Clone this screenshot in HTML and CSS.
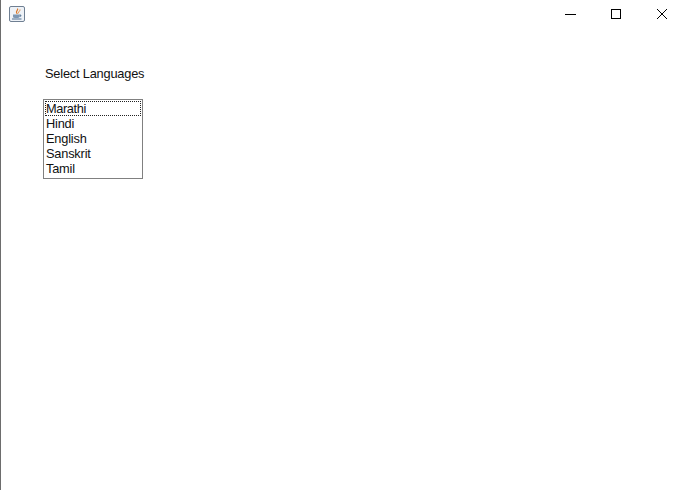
FILE: index.html
```html
<!DOCTYPE html>
<html lang="en">
<head>
    <meta charset="UTF-8">
    <title>Select Languages</title>
    <link rel="stylesheet" href="styles.css">
</head>
<body>
<div class="window">
    <div class="title-bar">
        <svg class="app-icon" width="16" height="16" viewBox="0 0 16 16">
            <rect x="0.5" y="0.5" width="15" height="15" rx="1.5" fill="#eef2f7" stroke="#6f7f92"/>
            <path d="M8.5 2.5c1 1.5-1.5 2.5-1 4 .2.6.6 1 .9 1.4" fill="none" stroke="#d9772b" stroke-width="1.2"/>
            <path d="M11 3.5c.3 1.6-2 2-1.4 3.8" fill="none" stroke="#e08a3c"/>
            <path d="M4 8.5h6.5v2.2c0 1-1 1.3-3.2 1.3S4 11.700 4 10.700z" fill="#7d97b3"/>
            <path d="M10.500 9h1.300v1.200h-1.300" fill="none" stroke="#4f6f91"/>
            <path d="M3 13h9.500" stroke="#4f6f91"/>
        </svg>
        <div class="window-buttons">
            <button class="win-btn">
                <svg width="12" height="12" viewBox="0 0 12 12"><path d="M1 6.500h11" stroke="#000"/></svg>
            </button>
            <button class="win-btn">
                <svg width="12" height="12" viewBox="0 0 12 12"><rect x="1.500" y="1.500" width="9" height="9" fill="none" stroke="#000"/></svg>
            </button>
            <button class="win-btn">
                <svg width="12" height="12" viewBox="0 0 12 12"><path d="M1 1l10 10M11 1L1 11" stroke="#000" fill="none"/></svg>
            </button>
        </div>
    </div>
    <div class="content">
        <div class="field-label">Select Languages</div>
        <ul class="list-box">
            <li class="list-item selected">Marathi</li>
            <li class="list-item">Hindi</li>
            <li class="list-item">English</li>
            <li class="list-item">Sanskrit</li>
            <li class="list-item">Tamil</li>
        </ul>
    </div>
</div>
</body>
</html>
```

FILE: styles.css
```css
html, body {
    margin: 0;
    height: 100%;
    overflow: hidden;
}
body {
    font-family: "Liberation Sans", Arial, sans-serif;
    font-size: 12.8px;
    letter-spacing: -0.2px;
    color: #111;
    background-color: #fff;
}
.window {
    height: 100%;
    box-sizing: border-box;
    border-left: 1px solid #6d6d6d;
}
.title-bar {
    display: flex;
    justify-content: space-between;
    height: 28px;
}
.app-icon {
    margin: 6px 0 0 8px;
}
.window-buttons {
    display: flex;
    margin-right: -2px;
}
.win-btn {
    width: 46px;
    height: 28px;
    padding: 0;
    border: none;
    background: none;
    display: flex;
    align-items: center;
    justify-content: center;
}
.content {
    padding: 38px 0 0 42px;
}
.field-label {
    height: 15px;
    line-height: 15px;
    margin-left: 2px;
}
.list-box {
    list-style: none;
    margin: 18px 0 0;
    padding: 1px 0 1px 1px;
    width: 97px;
    height: 76px;
    border: 1px solid #808080;
}
.list-item {
    height: 15px;
    line-height: 15px;
    padding-left: 1px;
    box-sizing: border-box;
}
.list-item.selected {
    margin-right: 1px;
    letter-spacing: -0.4px;
    outline: 1px dotted #222;
    outline-offset: -1px;
}
```
